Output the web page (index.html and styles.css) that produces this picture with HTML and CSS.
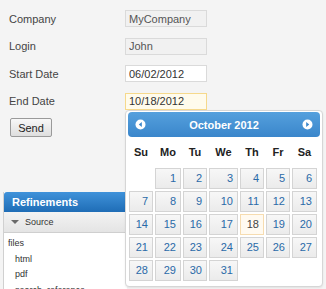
FILE: index.html
```html
<!DOCTYPE html>
<html lang="en">
<head>
    <meta charset="UTF-8">
    <title>Search form</title>
    <link rel="stylesheet" href="styles.css">
</head>
<body>
    <form class="search-form">
        <div class="field">
            <label>Company</label>
            <input class="input readonly" type="text" value="MyCompany" readonly>
        </div>
        <div class="field">
            <label>Login</label>
            <input class="input readonly" type="text" value="John" readonly>
        </div>
        <div class="field">
            <label>Start Date</label>
            <input class="input" type="text" value="06/02/2012">
        </div>
        <div class="field">
            <label>End Date</label>
            <input class="input focused" type="text" value="10/18/2012">
        </div>
        <button class="send-button" type="button">Send</button>
    </form>

    <div class="refinements">
        <div class="ref-header">Refinements</div>
        <div class="ref-group">
            <span class="caret"></span>
            Source
        </div>
        <ul class="ref-list">
            <li>files</li>
            <li class="sub">html</li>
            <li class="sub">pdf</li>
            <li class="sub">search_reference</li>
        </ul>
    </div>

    <!-- datepicker popup -->
    <div class="datepicker">
        <div class="dp-header">
            <svg class="dp-nav" width="11" height="11" viewBox="0 0 11 11">
                <circle cx="5.5" cy="5.5" r="5" fill="#fff"/>
                <path d="M6.8 3 L3.8 5.5 L6.8 8 Z" fill="#3a86cb"/>
            </svg>
            <span class="dp-title">October 2012</span>
            <svg class="dp-nav" width="11" height="11" viewBox="0 0 11 11">
                <circle cx="5.5" cy="5.5" r="5" fill="#fff"/>
                <path d="M4.2 3 L7.2 5.5 L4.2 8 Z" fill="#3a86cb"/>
            </svg>
        </div>
        <div class="dp-grid">
            <div class="dow">Su</div>
            <div class="dow">Mo</div>
            <div class="dow">Tu</div>
            <div class="dow">We</div>
            <div class="dow">Th</div>
            <div class="dow">Fr</div>
            <div class="dow">Sa</div>
        </div>
        <div class="dp-grid days" id="days"></div>
    </div>

    <script>
        // build the month
        const days = document.getElementById('days');
        const firstDay = 1;
        for (let i = 0; i < firstDay; i++) {
            days.appendChild(document.createElement('span'));
        }
        for (let d = 1; d <= 31; d++) {
            const cell = document.createElement('a');
            cell.className = 'day' + (d === 18 ? ' today' : '');
            cell.textContent = d;
            days.appendChild(cell);
        }
    </script>
</body>
</html>
```

FILE: styles.css
```css
body {
    margin: 0;
    background: #f4f4f4;
    font-family: "Liberation Sans", Arial, sans-serif;
    font-size: 11px;
    color: #333;
    height: 289px;
    overflow: hidden;
    position: relative;
}

.search-form {
    display: flex;
    flex-direction: column;
    align-items: flex-start;
    gap: 10.6px;
    padding: 10px 0 0 9px;
}

.field {
    display: flex;
    align-items: center;
    height: 17px;
}

.field label {
    width: 116px;
    color: #444;
}

.input {
    box-sizing: border-box;
    width: 82px;
    height: 17px;
    margin: 0;
    padding: 0 3px;
    font-family: inherit;
    font-size: 11px;
    color: #333;
    background: #fff;
    border: 1px solid #dadada;
    outline: none;
}

.input.readonly {
    background: #f1f1f1;
    color: #555;
}

.input.focused {
    background: #fffbec;
    border-color: #f6d98c;
}

.send-button {
    margin: -2px 0 0 1px;
    width: 42px;
    height: 19px;
    padding: 0;
    font-family: inherit;
    font-size: 11px;
    color: #222;
    background: linear-gradient(#f8f8f8, #dedede);
    border: 1px solid #9a9a9a;
    border-radius: 2px;
}

.refinements {
    position: absolute;
    top: 192px;
    left: 3px;
    width: 123px;
    bottom: 0;
    background: #fff;
    border-left: 1px solid #d0d0d0;
}

.ref-header {
    height: 20px;
    line-height: 20px;
    padding-left: 8px;
    color: #fff;
    font-weight: bold;
    font-size: 11px;
    background: linear-gradient(#3f92da, #1f6db6);
    border-radius: 3px 0 0 0;
}

.ref-group {
    display: flex;
    align-items: center;
    gap: 6px;
    height: 20px;
    padding-left: 7px;
    font-size: 9px;
    color: #333;
    background: linear-gradient(#f3f3f3, #e4e4e4);
    border-bottom: 1px solid #cfcfcf;
}

.caret {
    width: 0;
    height: 0;
    border-left: 4px solid transparent;
    border-right: 4px solid transparent;
    border-top: 4px solid #6a6a6a;
}

.ref-list {
    list-style: none;
    margin: 0;
    padding: 3px 0 0 4px;
    font-size: 9px;
    color: #333;
}

.ref-list li {
    height: 15.5px;
    line-height: 15.5px;
}

.ref-list li.sub {
    padding-left: 7px;
}

.datepicker {
    position: absolute;
    top: 110px;
    left: 125px;
    width: 192px;
    height: 170px;
    padding: 1px 2px 4px;
    background: #fff;
    border: 1px solid #d6d6d6;
    border-radius: 4px;
    box-shadow: 0 1px 2px rgba(0,0,0,0.08);
}

.dp-header {
    display: flex;
    align-items: center;
    justify-content: space-between;
    height: 25px;
    padding: 0 7px 0 7px;
    background: linear-gradient(#55a0dd, #3a86cb);
    border-radius: 4px;
}

.dp-nav {
    display: block;
}

.dp-title {
    color: #fff;
    font-weight: bold;
    font-size: 11px;
}

.dp-grid {
    display: grid;
    grid-template-columns: 24px 26px 24px 29px 24px 24px 25px;
    column-gap: 2px;
    padding: 0 1px;
}

.dow {
    height: 31px;
    line-height: 31px;
    text-align: center;
    font-weight: bold;
    color: #222;
}

.days {
    grid-auto-rows: 21px;
    row-gap: 2px;
}

.day {
    box-sizing: border-box;
    display: block;
    text-align: right;
    padding-right: 4px;
    line-height: 19px;
    color: #2a6aa8;
    background: linear-gradient(#f7f7f7, #ebebeb);
    border: 1px solid #d4d4d4;
}

.day.today {
    color: #444;
    background: #fffaf1;
    border-color: #f6dcb0;
}
```
